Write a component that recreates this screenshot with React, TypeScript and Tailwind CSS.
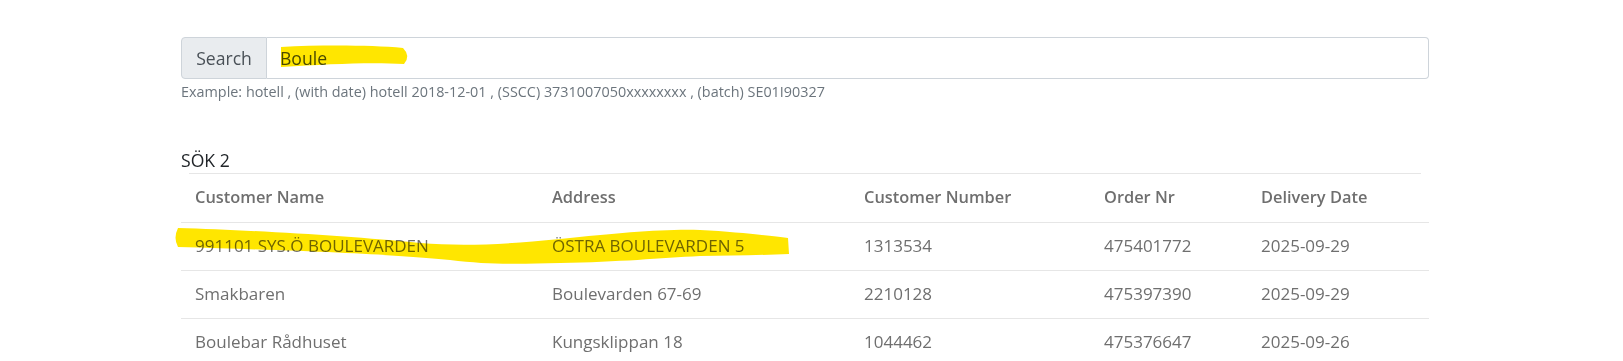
import React from "react";

const rows = [
  { name: "991101 SYS.Ö BOULEVARDEN", address: "ÖSTRA BOULEVARDEN 5", customer: "1313534", order: "475401772", date: "2025-09-29" },
  { name: "Smakbaren", address: "Boulevarden 67-69", customer: "2210128", order: "475397390", date: "2025-09-29" },
  { name: "Boulebar Rådhuset", address: "Kungsklippan 18", customer: "1044462", order: "475376647", date: "2025-09-26" },
];

const cols = [
  { label: "Customer Name", w: "w-[357px]" },
  { label: "Address", w: "w-[312px]" },
  { label: "Customer Number", w: "w-[240px]" },
  { label: "Order Nr", w: "w-[157px]" },
  { label: "Delivery Date", w: "w-[182px]" },
];

function Marker() {
  // yellow hand-drawn highlights laid over the page
  return (
    <svg className="absolute inset-0 pointer-events-none mix-blend-multiply" width="1623" height="361">
      <path
        d="M281 47 C 320 45, 370 45, 403 48 Q 411 56 404 64 C 370 62, 330 64, 281 67 Z"
        fill="#ffe600"
      />
      <path
        d="M178 228 C 250 230, 350 236, 420 243 C 460 246, 500 245, 560 239 C 620 233, 660 229, 700 230 C 740 232, 770 236, 788 238 L 789 254 C 760 255, 730 256, 700 256 C 660 258, 620 262, 560 263 C 520 264, 490 265, 450 260 C 400 255, 320 251, 178 247 Q 173 238 178 228 Z"
        fill="#ffe600"
      />
    </svg>
  );
}

export default function App() {
  return (
    <div className="relative min-h-screen bg-white font-['Open_Sans',sans-serif] text-[17.6px]">
      <div className="ml-[181px] w-[1248px] pt-[37px]">
        <div className="flex h-[42px]">
          <div className="flex items-center w-[86px] justify-center bg-[#e9ecef] border border-[#ced4da] rounded-l-[4px] text-[#495057]">
            Search
          </div>
          <div className="flex-1 flex items-center pl-[13px] border border-l-0 border-[#ced4da] rounded-r-[4px] text-[#495057]">
            Boule
          </div>
        </div>
        <p className="mt-[3px] text-[14.4px] leading-[20px] text-[#6c757d]">
          Example: hotell , (with date) hotell 2018-12-01 , (SSCC) 3731007050xxxxxxxx , (batch) SE01I90327
        </p>

        <h2 className="mt-[45px] leading-[26px] text-[#212529]">SÖK 2</h2>
        <div className="mx-[8px] h-px bg-[#e6e6e6]" />

        <table className="table-fixed w-full border-collapse">
          <thead>
            <tr className="border-b border-[#e6e6e6] h-[48px]">
              {cols.map((c) => (
                <th key={c.label} className={`${c.w} pl-[14px] text-left font-semibold text-[16.4px] text-[#6f6f6f]`}>
                  {c.label}
                </th>
              ))}
            </tr>
          </thead>
          <tbody>
            {rows.map((r) => (
              <tr key={r.order} className="border-b border-[#e6e6e6] h-[48px] text-[17px] text-[#6f6f6f]">
                <td className="pl-[14px]">{r.name}</td>
                <td className="pl-[14px]">{r.address}</td>
                <td className="pl-[14px]">{r.customer}</td>
                <td className="pl-[14px]">{r.order}</td>
                <td className="pl-[14px]">{r.date}</td>
              </tr>
            ))}
          </tbody>
        </table>
      </div>
      <Marker />
    </div>
  );
}
